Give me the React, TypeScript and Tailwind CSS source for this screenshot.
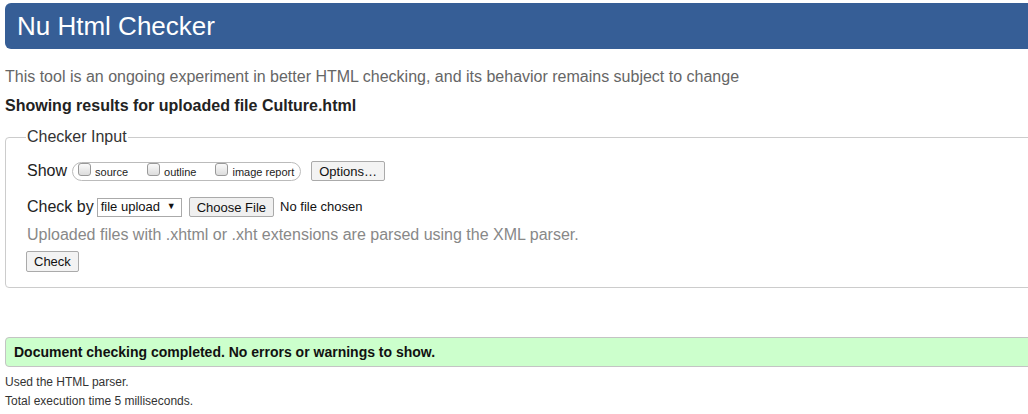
export default function App() {
  return (
    <div className="h-[414px] w-[1028px] overflow-hidden bg-white font-['Liberation_Sans',Arial,sans-serif] text-[#222]">
      <div className="w-[1060px] pt-[3px] pl-[5px]">
        <h1 className="flex h-[46px] items-center rounded-[6px] bg-[#365e96] pl-[12px] text-[26px] text-white">
          Nu Html Checker
        </h1>

        <p className="mt-[16px] text-[16px] text-[#666]">
          This tool is an ongoing experiment in better HTML checking, and its behavior remains subject to change
        </p>
        <p className="mt-[5px] text-[16px] font-bold text-[#222]">Showing results for uploaded file Culture.html</p>

        <fieldset className="mt-[7px] rounded-[4px] border border-[#ccc] pb-[14px] pl-[21px] pt-[4px]">
          <legend className="ml-[-1px] px-[1px] text-[16px] text-[#333]">Checker Input</legend>

          <div className="mt-[6px] flex items-center">
            <span className="text-[16px] text-[#222]">Show</span>
            <div className="ml-[5px] flex h-[19px] items-center rounded-full border border-[#bbb] pl-[5px] pr-[6px] text-[11px]">
              <Check label="source" />
              <span className="w-[19px]" />
              <Check label="outline" />
              <span className="w-[19px]" />
              <Check label="image report" />
            </div>
            <button className="ml-[10px] h-[20px] rounded-[2px] border border-[#aaa] bg-[#f3f3f3] px-[7px] text-[13px] text-[#111]">
              Options…
            </button>
          </div>

          <div className="mt-[12px] flex items-center">
            <span className="text-[16px] text-[#222]">Check by</span>
            <div className="ml-[3px] flex h-[19px] w-[85px] items-center justify-between border border-[#aaa] bg-white pl-[3px] pr-[5px] text-[13px] text-[#111]">
              <span>file upload</span>
              <span className="text-[9px]">▼</span>
            </div>
            <button className="ml-[7px] h-[20px] rounded-[2px] border border-[#aaa] bg-[#f0f0f0] px-[7px] text-[13px] text-[#111]">
              Choose File
            </button>
            <span className="ml-[6px] text-[13px] text-[#111]">No file chosen</span>
          </div>

          <p className="mt-[4px] text-[16px] text-[#888]">
            Uploaded files with .xhtml or .xht extensions are parsed using the XML parser.
          </p>

          <button className="mt-[4px] ml-[-1px] h-[21px] rounded-[2px] border border-[#aaa] bg-[#f3f3f3] px-[7px] text-[13px] text-[#111]">
            Check
          </button>
        </fieldset>

        <div className="mt-[49px] flex h-[30px] items-center rounded-[4px] border border-[#c4c4c4] bg-[#ccffcc] pl-[8px] text-[14px] font-bold text-[#111]">
          Document checking completed. No errors or warnings to show.
        </div>

        <p className="mt-[6px] text-[12px] text-[#333]">Used the HTML parser.</p>
        <p className="mt-[1px] text-[12px] text-[#333]">Total execution time 5 milliseconds.</p>
      </div>
    </div>
  );
}

function Check({ label }: { label: string }) {
  return (
    <span className="flex items-center">
      <span className="-mt-[3px] h-[13px] w-[13px] rounded-[3px] border border-[#999] bg-gradient-to-b from-[#fafafa] to-[#ddd]" />
      <span className="ml-[4px] mt-[2px] text-[#222]">{label}</span>
    </span>
  );
}
